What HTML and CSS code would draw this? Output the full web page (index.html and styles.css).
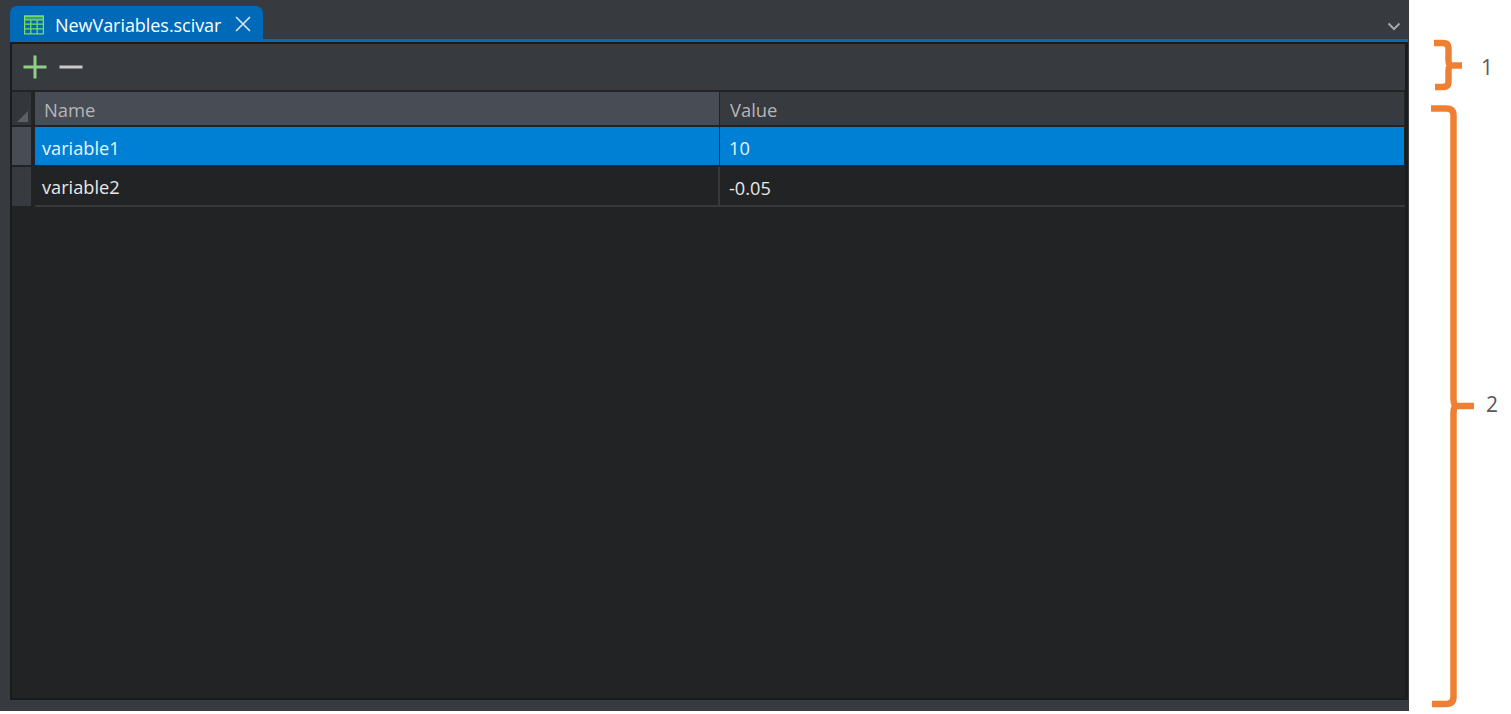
FILE: index.html
```html
<!DOCTYPE html>
<html lang="en">
<head>
<meta charset="utf-8">
<title>NewVariables.scivar</title>
<link rel="stylesheet" href="styles.css">
</head>
<body>
<div class="app">
  <div class="tabbar">
    <div class="tab">
      <svg class="tab-icon" width="22" height="20" viewBox="0 0 22 20" fill="none" stroke="#7be05a" stroke-width="1.2">
        <rect x="1.6" y="1.1" width="18.8" height="17.8"/>
        <rect x="1.6" y="1.1" width="18.8" height="3.8" fill="#7be05a" fill-opacity="0.45"/>
        <path d="M1.6 9.2H20.4M1.6 13.8H20.4M7.8 5V19M14.2 5V19"/>
      </svg>
      <span class="tab-title">NewVariables.scivar</span>
      <svg class="tab-close" width="18" height="18" viewBox="0 0 18 18" stroke="#d5e3f0" stroke-width="1.7" fill="none">
        <path d="M2 2L16 16M16 2L2 16"/>
      </svg>
    </div>
    <svg class="chevron" width="14" height="9" viewBox="0 0 14 9" fill="none" stroke="#a4a7ab" stroke-width="2">
      <path d="M1.5 1.5L7 7L12.5 1.5"/>
    </svg>
  </div>
  <div class="panel">
    <div class="toolbar">
      <svg class="tool" width="24" height="24" viewBox="0 0 24 24" stroke="#8fd184" stroke-width="3" fill="none">
        <path d="M12 0.5V23.5M0.5 12H23.5"/>
      </svg>
      <svg class="tool" width="24" height="24" viewBox="0 0 24 24" stroke="#c9c9c9" stroke-width="3" fill="none">
        <path d="M0.5 12H23.5"/>
      </svg>
    </div>
    <div class="grid">
      <div class="corner">
        <svg width="11" height="11" viewBox="0 0 11 11"><path d="M11 0V11H0Z" fill="#5c5f64"/></svg>
      </div>
      <div class="head head-name">Name</div>
      <div class="head head-value">Value</div>
      <div class="row-head"></div>
      <div class="cell selected">variable1</div>
      <div class="cell selected cell-value">10</div>
      <div class="row-head row-head-dark"></div>
      <div class="cell plain">variable2</div>
      <div class="cell plain cell-value">-0.05</div>
    </div>
  </div>
  <div class="statusbar"></div>
</div>
<div class="notes">
  <div class="note note-one">
    <svg width="30" height="52" viewBox="0 0 30 52" fill="none" stroke="#ef8033" stroke-width="6.5">
      <path d="M0 4H9Q14.5 4 14.5 9V21Q14.5 26.5 18 26.5H28M18 26.5Q14.5 26.5 14.5 32V43Q14.5 48 9 48H1"/>
    </svg>
    <span class="note-label">1</span>
  </div>
  <div class="note note-two">
    <svg width="48" height="606" viewBox="0 0 48 606" fill="none" stroke="#ef8033" stroke-width="6.5">
      <path d="M3 4.5H18Q25.5 4.5 25.5 11V295Q25.5 302 29 302H46M29 302Q25.5 302 25.5 309V593Q25.5 600 18 600H4"/>
    </svg>
    <span class="note-label">2</span>
  </div>
</div>
</body>
</html>
```
FILE: styles.css
```css
* { box-sizing: border-box; }
html, body { margin: 0; padding: 0; }
body {
  width: 1511px;
  height: 714px;
  overflow: hidden;
  background: #fff;
  display: flex;
  align-items: flex-start;
  font-family: "Open Sans", "Noto Sans", sans-serif;
}
.app {
  width: 1409px;
  height: 711px;
  display: flex;
  flex-direction: column;
  background: #373a3f;
}
.tabbar {
  height: 39px;
  flex: none;
  padding: 6px 0 0 10px;
  display: flex;
  align-items: flex-start;
  justify-content: space-between;
}
.tab {
  width: 253px;
  height: 33px;
  background: #0069b8;
  border-radius: 7px 7px 0 0;
  display: flex;
  align-items: center;
  padding: 4px 0 0 13px;
  color: #fff;
}
.tab-icon { flex: none; }
.tab-title { margin: 1px 0 0 10px; font-size: 18px; white-space: nowrap; letter-spacing: -0.05px; }
.tab-close { flex: none; margin: -1px 0 0 13px; }
.chevron { margin: 16px 8px 0 0; }
.panel {
  flex: 1;
  margin-left: 10px;
  margin-right: 1px;
  border-top: 3px solid #0069b8;
  background: #222325;
  display: flex;
  flex-direction: column;
  padding: 2px 3px 0 2px;
  box-shadow: inset 2px 0 0 #1b1c1e, inset -3px 0 0 #1b1c1e, inset 0 2px 0 #1b1c1e, inset 0 -2px 0 #191a1c;
}
.toolbar {
  height: 46px;
  flex: none;
  background: #373a3f;
  display: flex;
  align-items: center;
  gap: 12px;
  padding-left: 11px;
}
.tool { flex: none; }
.grid {
  margin-top: 2px;
  display: grid;
  grid-template-columns: 21px 684px 1fr;
  grid-template-rows: 34px 39px 42px;
  column-gap: 0;
}
.corner {
  background: #33363a;
  border-right: 2px solid #222325;
  border-bottom: 2px solid #222325;
  display: flex;
  align-items: flex-end;
  justify-content: flex-end;
  padding: 0 3px 3px 0;
  height: 35px;
}
.head {
  height: 35px;
  font-size: 18.4px;
  color: #b4b6b9;
  padding: 2px 0 0 9px;
  display: flex;
  align-items: center;
  border-bottom: 2px solid #222325;
}
.head-name { background: #484c54; margin-left: 2px; margin-right: -2px; }
.head-value { background: #373a3f; margin-left: 3px; margin-right: 1px; padding-left: 10px; }
.row-head { background: #484c54; border-right: 2px solid #222325; margin-top: 1px; height: 38px; }
.row-head-dark { background: #373a3f; margin-top: 2px; height: 39px; }
.cell {
  font-size: 18.2px;
  display: flex;
  align-items: center;
  padding: 3px 0 0 7px;
  color: #e8e8e8;
  margin-top: 1px;
  height: 38px;
}
.cell.selected { background: #0080d4; color: #eaf4fb; margin-left: 2px; margin-right: -2px; }
.cell.selected.cell-value { margin-left: 3px; margin-right: 1px; padding: 4px 0 0 9px; }
.cell.plain { margin: 2px -2px 0 2px; height: 40px; border-bottom: 2px solid #37393d; padding-top: 2px; }
.cell.plain.cell-value { margin: 2px 0 0 1px; padding: 4px 0 0 9px; border-left: 2px solid #37393d; }
.statusbar { height: 11px; flex: none; background: #373a3f; }
.notes {
  flex: 1;
  height: 714px;
  position: relative;
}
.note { position: absolute; display: flex; align-items: center; }
.note-one { left: 25px; top: 39px; }
.note-two { left: 19px; top: 104px; }
.note-label { font-size: 21px; color: #595959; }
.note-one .note-label { margin: 3px 0 0 17px; }
.note-two .note-label { margin-left: 10px; margin-top: -6px; }
```
